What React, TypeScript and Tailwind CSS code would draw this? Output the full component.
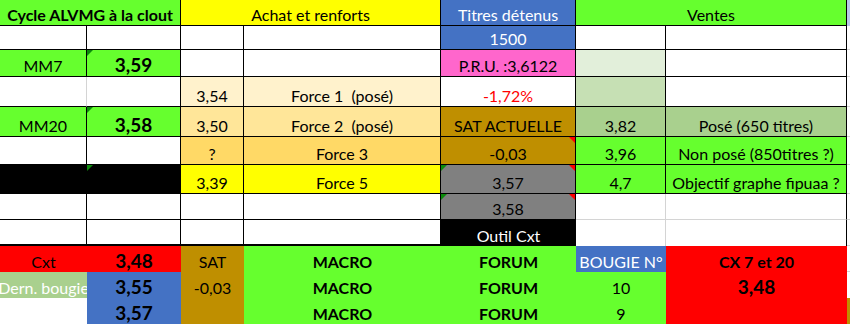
import React from 'react';

type CellProps = {
  className?: string;
  children?: React.ReactNode;
  tl?: boolean;
  tr?: boolean;
};

// one spreadsheet cell, text sits near the bottom like in Excel
const Cell: React.FC<CellProps> = ({ className = '', children, tl, tr }) => (
  <div
    className={`relative flex items-end justify-center overflow-hidden whitespace-pre pb-[1px] leading-none ${className}`}
  >
    {tl && (
      <span className="absolute left-0 top-0 h-0 w-0 border-t-[6px] border-r-[6px] border-t-[#0a8a0a] border-r-transparent" />
    )}
    {tr && (
      <span className="absolute right-0 top-0 h-0 w-0 border-t-[6px] border-l-[6px] border-t-[#ff0000] border-l-transparent" />
    )}
    <span className="pb-[1px]">{children}</span>
  </div>
);

const bk = 'border-r border-b border-black';
const gr = 'border-r border-b border-[#d4d4d4]';
const green = 'bg-[#66ff2e]';
const big = 'text-[19px] font-bold';

const App: React.FC = () => {
  return (
    <div
      className="grid h-[324px] w-[850px] grid-cols-[87px_94px_63px_197px_135px_90px_181px_3px] grid-rows-[26px_24px_27px_30px_30px_28px_29px_26px_26px_26px_26px_26px] overflow-hidden bg-white text-[16px] text-black"
      style={{ fontFamily: 'Lato, "Liberation Sans", sans-serif' }}
    >
      {/* row 1 : headers */}
      <Cell className={`col-span-2 font-bold ${green} ${bk}`}>Cycle ALVMG à la clout</Cell>
      <Cell className={`col-span-2 bg-[#ffff00] ${bk}`}>Achat et renforts</Cell>
      <Cell className={`bg-[#4472c4] text-white ${bk}`}>Titres détenus</Cell>
      <Cell className={`col-span-2 ${green} ${bk}`}>Ventes</Cell>
      <Cell className="bg-[#b8c8e8]" />

      {/* row 2 */}
      <Cell className={bk} />
      <Cell className={bk} />
      <Cell className={bk} />
      <Cell className={bk} />
      <Cell className={`bg-[#4472c4] text-white ${bk}`}>1500</Cell>
      <Cell className={bk} />
      <Cell className={bk} />
      <Cell className="border-b border-[#d4d4d4]" />

      {/* row 3 */}
      <Cell className={`${green} ${bk}`}>MM7</Cell>
      <Cell className={`${green} ${big} ${bk}`} tl>
        3,59
      </Cell>
      <Cell className={bk} />
      <Cell className={bk} />
      <Cell className={`bg-[#ff66cc] ${bk}`}>P.R.U. :3,6122</Cell>
      <Cell className={`bg-[#e2efda] ${bk}`} />
      <Cell className={bk} />
      <Cell className="border-b border-[#d4d4d4]" />

      {/* row 4 */}
      <Cell className="border-r border-r-[#d4d4d4] border-b border-b-black" />
      <Cell className={bk} />
      <Cell className={`bg-[#fff2cc] ${bk}`}>3,54</Cell>
      <Cell className={`bg-[#fff2cc] ${bk}`}>Force 1  (posé)</Cell>
      <Cell className={`text-[#ff0000] ${bk}`}>-1,72%</Cell>
      <Cell className={`bg-[#c6e0b4] ${bk}`} />
      <Cell className={bk} />
      <Cell className="border-b border-[#d4d4d4]" />

      {/* row 5 */}
      <Cell className={`${green} ${bk}`}>MM20</Cell>
      <Cell className={`${green} ${big} ${bk}`} tl>
        3,58
      </Cell>
      <Cell className={`bg-[#ffe699] ${bk}`}>3,50</Cell>
      <Cell className={`bg-[#ffe699] ${bk}`}>Force 2  (posé)</Cell>
      <Cell className={`bg-[#bf8f00] ${bk}`}>SAT ACTUELLE</Cell>
      <Cell className={`bg-[#a9d08e] ${bk}`}>3,82</Cell>
      <Cell className={`bg-[#a9d08e] ${bk}`}>Posé (650 titres)</Cell>
      <Cell className="border-b border-[#d4d4d4]" />

      {/* row 6 */}
      <Cell className={bk} />
      <Cell className={bk} />
      <Cell className={`bg-[#ffd966] ${bk}`}>?</Cell>
      <Cell className={`bg-[#ffd966] ${bk}`}>Force 3</Cell>
      <Cell className={`bg-[#bf8f00] ${bk}`} tr>
        -0,03
      </Cell>
      <Cell className={`${green} ${bk}`}>3,96</Cell>
      <Cell className={`${green} ${bk}`}>Non posé (850titres ?)</Cell>
      <Cell className="border-b border-[#d4d4d4]" />

      {/* row 7 */}
      <Cell className={`bg-black ${bk}`} />
      <Cell className={`bg-black ${bk}`} tl />
      <Cell className={`bg-[#ffff00] ${bk}`}>3,39</Cell>
      <Cell className={`bg-[#ffff00] ${bk}`}>Force 5</Cell>
      <Cell className={`bg-[#808080] ${bk}`} tl tr>
        3,57
      </Cell>
      <Cell className={`${green} ${bk}`}>4,7</Cell>
      <Cell className={`${green} ${bk}`}>Objectif graphe fipuaa ?</Cell>
      <Cell className="border-b border-[#d4d4d4]" />

      {/* row 8 */}
      <Cell className={bk} />
      <Cell className={bk} />
      <Cell className={bk} />
      <Cell className={bk} />
      <Cell className={`bg-[#808080] ${bk}`} tl tr>
        3,58
      </Cell>
      <Cell className={gr} />
      <Cell className="border-r border-r-black border-b border-b-[#d4d4d4]" />
      <Cell className="border-b border-[#d4d4d4]" />

      {/* row 9 */}
      <Cell className="border-r border-b-2 border-black" />
      <Cell className="border-r border-b-2 border-black" />
      <Cell className="border-r border-b-2 border-black" />
      <Cell className="border-r border-b-2 border-black" />
      <Cell className="bg-black text-white">Outil Cxt</Cell>
      <Cell className="border-r border-[#d4d4d4]" />
      <Cell className="border-r border-black" />
      <Cell className="border-b border-[#d4d4d4]" />

      {/* row 10 */}
      <Cell className="bg-[#ff0000]">Cxt</Cell>
      <Cell className={`bg-[#ff0000] ${big}`}>3,48</Cell>
      <Cell className="bg-[#bf8f00]">SAT</Cell>
      <Cell className={`${green} font-bold`}>MACRO</Cell>
      <Cell className={`${green} font-bold`}>FORUM</Cell>
      <Cell className="bg-[#4472c4] text-white">BOUGIE N°</Cell>
      <Cell className="bg-[#ff0000] font-bold">CX 7 et 20</Cell>
      <Cell className="border-b border-[#d4d4d4]" />

      {/* row 11 */}
      <Cell className="bg-[#a9d08e] text-white">Dern. bougie</Cell>
      <Cell className={`bg-[#4472c4] ${big}`}>3,55</Cell>
      <Cell className="bg-[#bf8f00]">-0,03</Cell>
      <Cell className={`${green} font-bold`}>MACRO</Cell>
      <Cell className={`${green} font-bold`}>FORUM</Cell>
      <Cell className={green}>10</Cell>
      <Cell className={`bg-[#ff0000] ${big}`}>3,48</Cell>
      <Cell />

      {/* row 12 */}
      <Cell />
      <Cell className={`bg-[#4472c4] ${big}`}>3,57</Cell>
      <Cell className="bg-[#bf8f00]" />
      <Cell className={`${green} font-bold`}>MACRO</Cell>
      <Cell className={`${green} font-bold`}>FORUM</Cell>
      <Cell className={green}>9</Cell>
      <Cell className="bg-[#ff0000]" />
      <Cell className="bg-[#bf8f00]" />
    </div>
  );
};

export default App;
